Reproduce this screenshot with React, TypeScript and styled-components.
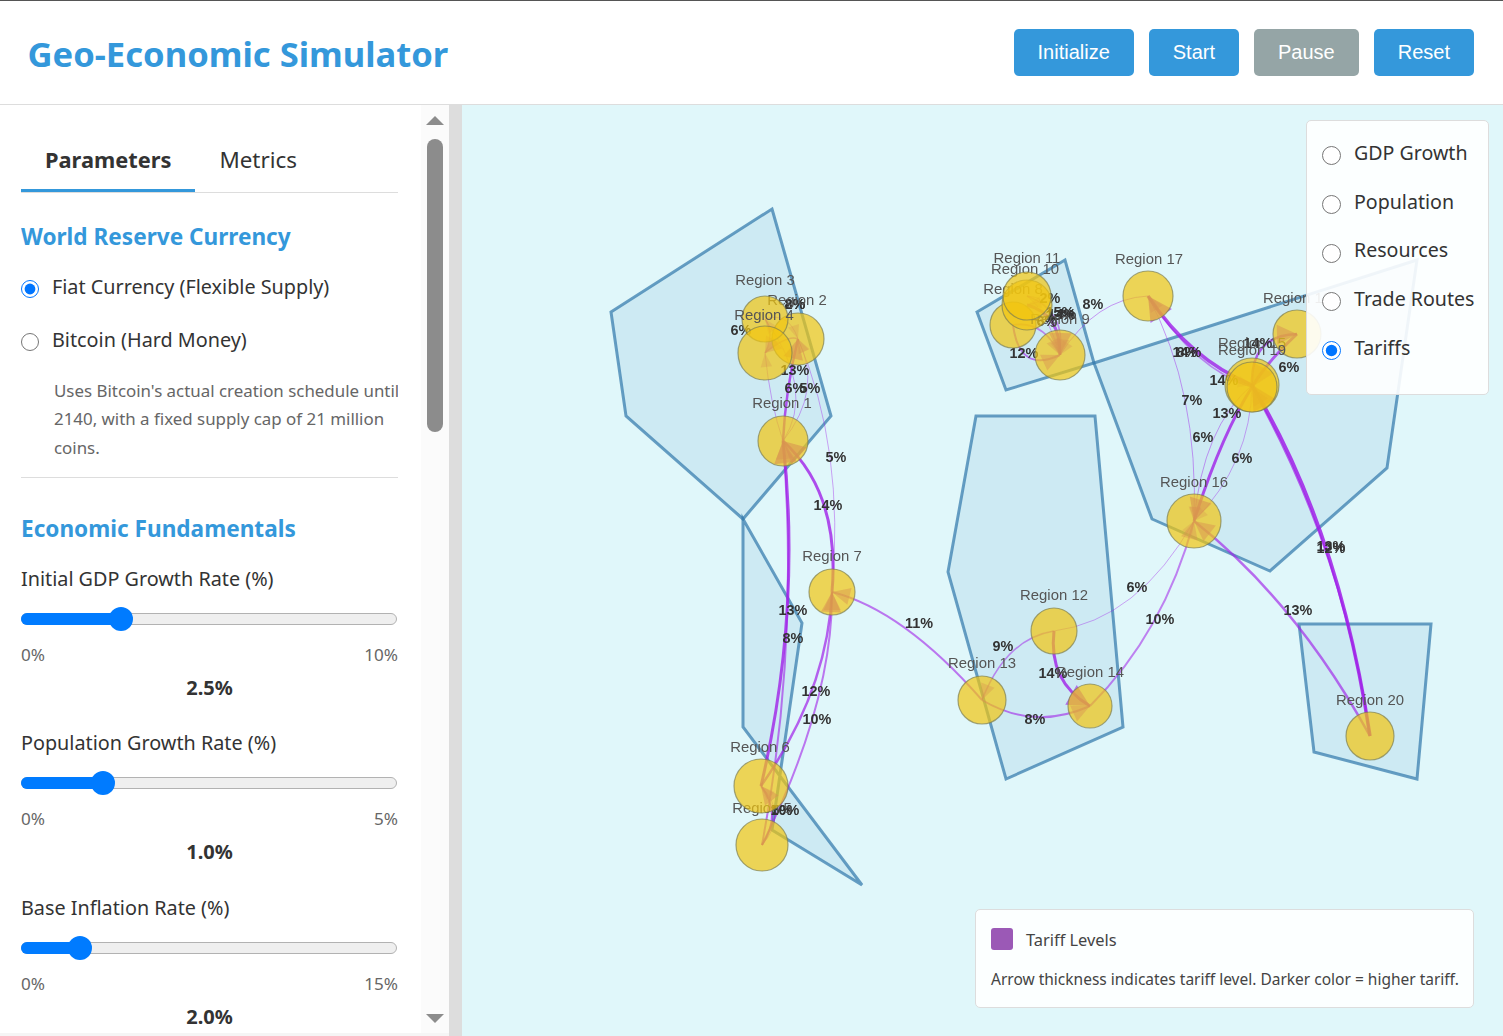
import React from "react";
import styled, { createGlobalStyle } from "styled-components";

const Global = createGlobalStyle`
  html, body { margin: 0; padding: 0; height: 100%; overflow: hidden; background: #f5f5f5; }
  #root { height: 100%; }
`;
const SANS = `"Noto Sans", "Open Sans", sans-serif`;
const ARIAL = `"Liberation Sans", Arial, sans-serif`;

const Page = styled.div`
  height: 1036px; display: flex; flex-direction: column;
  border-top: 1px solid #555; box-sizing: border-box; font-family: ${SANS}; color: #333;
`;
const Header = styled.header`
  height: 104px; box-sizing: border-box; background: #fff; border-bottom: 1px solid #ddd;
  display: flex; align-items: center; justify-content: space-between; padding: 0 29px 0 27.5px; flex: none;
`;
const Title = styled.h1`
  margin: 0; font-size: 34.6px; font-weight: 700; color: #3498db; line-height: 1; padding-top: 4px;
`;
const Buttons = styled.div`display: flex; gap: 15px;`;
const Button = styled.button<{ $muted?: boolean }>`
  height: 47px; padding: 0 24px; border: 0; border-radius: 5px; color: #fff;
  background: ${(p) => (p.$muted ? "#95a5a6" : "#3498db")};
  font-family: ${ARIAL}; font-size: 20px;
`;
const Body = styled.div`flex: 1; display: flex; min-height: 0;`;
const Sidebar = styled.aside`
  width: 449px; height: 928px; flex: none; display: flex; background: #fff; overflow: hidden;
`;
const SideContent = styled.div`width: 377px; margin-left: 21px; overflow: hidden; flex: none;`;
const Scrollbar = styled.div`
  width: 28px; margin-left: 23px; flex: none; background: #fbfbfb;
  display: flex; flex-direction: column; align-items: center;
`;
const ArrowUp = styled.div`
  width: 0; height: 0; margin-top: 11px; border-left: 9px solid transparent; border-right: 9px solid transparent;
  border-bottom: 9px solid #8c8c8c;
`;
const Thumb = styled.div`width: 16px; height: 293px; margin-top: 14px; border-radius: 8px; background: #8c8c8c;`;
const ArrowDown = styled.div`
  width: 0; height: 0; margin-top: auto; margin-bottom: 10px; border-left: 9px solid transparent; border-right: 9px solid transparent;
  border-top: 9px solid #8c8c8c;
`;
const Divider = styled.div`width: 13px; flex: none; background: #ddd;`;
const Tabs = styled.div`display: flex; height: 87px; border-bottom: 1px solid #ddd;`;
const Tab = styled.div<{ $active?: boolean }>`
  padding: 25px 24px 0; display: flex; align-items: center; height: 59px; margin-bottom: -1px;
  font-size: ${(p) => (p.$active ? "21.8px" : "22.4px")}; font-weight: ${(p) => (p.$active ? 700 : 400)};
  color: #333; border-bottom: 3px solid ${(p) => (p.$active ? "#3498db" : "transparent")};
`;
const SectionTitle = styled.h2<{ $top: number }>`
  margin: ${(p) => p.$top}px 0 0; font-size: 22.6px; line-height: 30px; font-weight: 700; color: #3498db;
`;
const RadioRow = styled.label<{ $top: number }>`
  display: flex; align-items: center; gap: 13px; margin-top: ${(p) => p.$top}px; height: 28px; font-size: 19.8px; color: #333;
`;
const Radio = styled.input.attrs({ type: "radio" })`
  width: 18px; height: 18px; margin: 6px 0 0; flex: none; accent-color: #0075ff;
`;
const Description = styled.p`
  margin: 23.5px 0 0 33px; font-size: 16.9px; line-height: 28.6px; color: #666; white-space: nowrap;
`;
const Rule = styled.hr`margin: 14.5px 0 0; border: 0; border-top: 1px solid #ddd;`;
const SliderGroup = styled.div<{ $top: number }>`margin-top: ${(p) => p.$top}px;`;
const SliderLabel = styled.div`font-size: 19.8px; line-height: 28px; color: #333;`;
const Track = styled.div`
  position: relative; height: 12px; margin-top: 20px; box-sizing: border-box;
  background: #efefef; border: 1px solid #b2b2b2; border-radius: 6px; margin-right: 1px;
`;
const Fill = styled.div`
  position: absolute; left: -1px; top: -1px; height: 12px; background: #007bff; border-radius: 6px;
`;
const Knob = styled.div`
  position: absolute; top: -7px; width: 24px; height: 24px; margin-left: -12px; border-radius: 50%; background: #007bff;
`;
const Range = styled.div`
  display: flex; justify-content: space-between; margin-top: 18px; font-size: 17.1px; line-height: 24px; color: #666;
`;
const Value = styled.div`
  text-align: center; font-size: 20px; line-height: 28px; margin-top: 7px; font-weight: 700; color: #333;
`;

const MapArea = styled.main`flex: 1; position: relative; background: #e0f7fa; overflow: hidden;`;
const MapSvg = styled.svg`position: absolute; inset: 0; width: 100%; height: 100%; filter: blur(0.6px);`;
const Overlay = styled.div`
  position: absolute; right: 14px; top: 15px; width: 183px; height: 275px; box-sizing: border-box;
  background: rgba(255, 255, 255, 0.9); border: 1px solid #ddd; border-radius: 5px;
  padding: 7px 0 0 15px; display: flex; flex-direction: column;
`;
const LayerRow = styled.label`
  display: flex; align-items: center; gap: 13px; height: 48.7px; font-size: 19.6px; color: #333; white-space: nowrap;
`;
const LayerRadio = styled(Radio)`width: 19px; height: 19px; margin-top: 7px;`;
const Legend = styled.div`
  position: absolute; right: 29px; bottom: 28px; width: 499px; height: 99px; box-sizing: border-box;
  background: rgba(255, 255, 255, 0.9); border: 1px solid #ddd; border-radius: 5px; padding: 18px 15px 0;
`;
const LegendHead = styled.div`display: flex; align-items: center; gap: 13px; height: 22px; font-size: 16.4px; color: #444;`;
const Swatch = styled.span`width: 22px; height: 22px; border-radius: 3px; background: #9b59b6; flex: none;`;
const LegendText = styled.div`margin-top: 17px; font-size: 15.5px; line-height: 24px; color: #444; white-space: nowrap;`;
const RegionLabel = styled.text`font-family: ${ARIAL}; font-size: 14.9px; fill: #555; text-anchor: middle;`;
const RouteLabel = styled.text`font-family: ${ARIAL}; font-size: 14.4px; font-weight: 700; fill: #333; text-anchor: middle;`;

type P = [number, number];
const regions: Record<number, { c: P; r: number; l: P }> = {
  1: { c: [783, 441], r: 25, l: [782, 408] },
  2: { c: [798, 339], r: 26, l: [797, 305] },
  3: { c: [765, 319], r: 23, l: [765, 285] },
  4: { c: [765, 353], r: 27, l: [764, 320] },
  5: { c: [762, 845], r: 26, l: [762, 813] },
  6: { c: [761, 786], r: 27, l: [760, 752] },
  7: { c: [832, 592], r: 23, l: [832, 561] },
  8: { c: [1013, 325], r: 23, l: [1013, 294] },
  9: { c: [1060, 355], r: 25, l: [1060, 324] },
  10: { c: [1027, 305], r: 25, l: [1025, 274] },
  11: { c: [1027, 296], r: 24, l: [1027, 263] },
  12: { c: [1054, 631], r: 23, l: [1054, 600] },
  13: { c: [982, 700], r: 24, l: [982, 668] },
  14: { c: [1090, 706], r: 22, l: [1090, 677] },
  15: { c: [1252, 385], r: 27, l: [1252, 348] },
  16: { c: [1194, 521], r: 27, l: [1194, 487] },
  17: { c: [1148, 296], r: 25, l: [1149, 264] },
  18: { c: [1297, 334], r: 24, l: [1297, 303] },
  19: { c: [1252, 387], r: 25, l: [1252, 355] },
  20: { c: [1370, 736], r: 24, l: [1370, 705] },
};
const polygons = [
  "772,209 831,416 743,519 626,416 611,312",
  "743,519 802,623 772,830 862,885 743,727",
  "977,312 1065,260 1094,363 1006,390",
  "1094,363 1417,260 1387,468 1270,571 1152,519",
  "976,416 1095,416 1123,727 1006,779 948,572",
  "1299,624 1431,624 1417,779 1314,752",
];
// from, to, point the curve passes through, width, opacity, label, label position
type Route = [number, number, P, number, number, string?, P?];
const routes: Route[] = [
  [7, 1, [824, 505], 3, 0.8, "14%", [828, 510]],
  [7, 2, [830, 457], 1, 0.4, "5%", [836, 462]],
  [6, 1, [787, 612], 3, 0.8, "13%", [793, 615]],
  [5, 1, [786, 645], 2, 0.6, "8%", [793, 643]],
  [6, 7, [812, 690], 2.5, 0.7, "12%", [816, 696]],
  [5, 7, [815, 710], 2, 0.6, "10%", [817, 724]],
  [5, 6, [772, 815], 2, 0.7, "10%", [785, 815]],
  [5, 6, [775, 815], 1, 0.4, "5%", [782, 815]],
  [1, 2, [788, 390], 2.5, 0.75, "13%", [795, 375]],
  [1, 3, [795, 385], 1, 0.4, "6%", [795, 393]],
  [1, 2, [807, 390], 1, 0.4, "5%", [810, 393]],
  [3, 4, [770, 335], 1.5, 0.5, "6%", [741, 335]],
  [2, 4, [785, 340], 1.5, 0.5, "2%", [795, 309]],
  [3, 2, [785, 320], 1, 0.4, "8%", [795, 309]],
  [1, 4, [772, 400], 1, 0.4],
  [13, 7, [905, 628], 2, 0.6, "11%", [919, 628]],
  [12, 13, [1012, 652], 1.5, 0.5, "9%", [1003, 651]],
  [12, 16, [1131, 598], 1, 0.4, "6%", [1137, 592]],
  [14, 16, [1153, 623], 2, 0.55, "10%", [1160, 624]],
  [12, 14, [1060, 675], 3, 0.8, "14%", [1053, 678]],
  [13, 14, [1035, 717], 2, 0.6, "8%", [1035, 724]],
  [20, 16, [1289, 615], 2.5, 0.65, "13%", [1298, 615]],
  [20, 15, [1325, 545], 3.5, 0.85, "12%", [1331, 553]],
  [20, 19, [1327, 555], 2, 0.7, "13%", [1331, 551]],
  [15, 17, [1195, 350], 3.5, 0.8, "14%", [1187, 357]],
  [19, 17, [1198, 356], 1.5, 0.5, "8%", [1187, 357]],
  [17, 16, [1185, 400], 1, 0.45, "7%", [1192, 405]],
  [15, 16, [1213, 440], 1, 0.45, "6%", [1203, 442]],
  [19, 16, [1222, 445], 3, 0.8, "13%", [1227, 418]],
  [15, 16, [1237, 458], 1, 0.4, "6%", [1242, 463]],
  [18, 19, [1270, 362], 3, 0.7, "6%", [1289, 372]],
  [19, 18, [1262, 348], 2.5, 0.7, "14%", [1258, 348]],
  [19, 15, [1230, 380], 1, 0.4, "14%", [1224, 385]],
  [8, 9, [1028, 357], 2, 0.6, "12%", [1024, 358]],
  [10, 9, [1052, 322], 3, 0.7, "15%", [1060, 317]],
  [11, 9, [1055, 318], 1.5, 0.5, "14%", [1062, 319]],
  [8, 9, [1040, 330], 1.5, 0.5, "13%", [1060, 320]],
  [11, 9, [1045, 318], 1, 0.4, "6%", [1047, 326]],
  [11, 10, [1040, 300], 1, 0.4, "2%", [1050, 303]],
  [17, 9, [1100, 312], 1, 0.45, "8%", [1093, 309]],
];

function RouteArrow({ route }: { route: Route }) {
  const [from, to, pass, width, opacity] = route;
  const a = regions[from].c;
  const b = regions[to].c;
  const cx = 2 * pass[0] - (a[0] + b[0]) / 2;
  const cy = 2 * pass[1] - (a[1] + b[1]) / 2;
  const dx = b[0] - cx;
  const dy = b[1] - cy;
  const len = Math.hypot(dx, dy) || 1;
  const ux = dx / len;
  const uy = dy / len;
  const size = 10 + width * 4;
  const half = 3 + width * 2.8;
  const bx = b[0] - ux * size;
  const by = b[1] - uy * size;
  const head = `${b[0]},${b[1]} ${bx - uy * half},${by + ux * half} ${bx + uy * half},${by - ux * half}`;
  return (
    <g>
      <path d={`M${a[0]} ${a[1]}Q${cx} ${cy} ${b[0]} ${b[1]}`} fill="none" stroke="#a020e8" strokeWidth={width} strokeOpacity={opacity} />
      <polygon points={head} fill="#a020e8" fillOpacity={opacity * 0.75} />
    </g>
  );
}

const sliders = [
  { label: "Initial GDP Growth Rate (%)", pct: 26.5, max: "10%", value: "2.5%" },
  { label: "Population Growth Rate (%)", pct: 21.7, max: "5%", value: "1.0%" },
  { label: "Base Inflation Rate (%)", pct: 15.6, max: "15%", value: "2.0%" },
];
const layers = ["GDP Growth", "Population", "Resources", "Trade Routes", "Tariffs"];

export default function App() {
  return (
    <Page>
      <Global />
      <Header>
        <Title>Geo-Economic Simulator</Title>
        <Buttons>
          <Button>Initialize</Button>
          <Button>Start</Button>
          <Button $muted>Pause</Button>
          <Button>Reset</Button>
        </Buttons>
      </Header>
      <Body>
        <Sidebar>
          <SideContent>
            <Tabs>
              <Tab $active>Parameters</Tab>
              <Tab>Metrics</Tab>
            </Tabs>
            <SectionTitle $top={29}>World Reserve Currency</SectionTitle>
            <RadioRow $top={20}><Radio name="money" defaultChecked />Fiat Currency (Flexible Supply)</RadioRow>
            <RadioRow $top={25}><Radio name="money" />Bitcoin (Hard Money)</RadioRow>
            <Description>
              Uses Bitcoin's actual creation schedule until<br />
              2140, with a fixed supply cap of 21 million<br />
              coins.
            </Description>
            <Rule />
            <SectionTitle $top={36}>Economic Fundamentals</SectionTitle>
            {sliders.map((s, i) => (
              <SliderGroup key={s.label} $top={i === 0 ? 21 : 27.5}>
                <SliderLabel>{s.label}</SliderLabel>
                <Track>
                  <Fill style={{ width: `${s.pct}%` }} />
                  <Knob style={{ left: `${s.pct}%` }} />
                </Track>
                <Range><span>0%</span><span>{s.max}</span></Range>
                <Value>{s.value}</Value>
              </SliderGroup>
            ))}
          </SideContent>
          <Scrollbar>
            <ArrowUp />
            <Thumb />
            <ArrowDown />
          </Scrollbar>
        </Sidebar>
        <Divider />
        <MapArea>
          <MapSvg viewBox="462 105 1041 931" preserveAspectRatio="none">
            {polygons.map((pts) => (
              <polygon key={pts} points={pts} fill="#2980b9" fillOpacity={0.1} stroke="#2f76aa" strokeOpacity={0.7} strokeWidth={3} />
            ))}
            {routes.map((r, i) => <RouteArrow key={i} route={r} />)}
            {routes.map((r, i) => r[5] && r[6] ? <RouteLabel key={i} x={r[6][0]} y={r[6][1]}>{r[5]}</RouteLabel> : null)}
            {Object.entries(regions).map(([id, reg]) => (
              <g key={id}>
                <circle cx={reg.c[0]} cy={reg.c[1]} r={reg.r} fill="#f1c40f" fillOpacity={0.7} stroke="#7f7f50" strokeOpacity={0.7} strokeWidth={1.2} />
                <RegionLabel x={reg.l[0]} y={reg.l[1]}>Region {id}</RegionLabel>
              </g>
            ))}
          </MapSvg>
          <Overlay>
            {layers.map((l) => (
              <LayerRow key={l}><LayerRadio name="layer" defaultChecked={l === "Tariffs"} />{l}</LayerRow>
            ))}
          </Overlay>
          <Legend>
            <LegendHead><Swatch />Tariff Levels</LegendHead>
            <LegendText>Arrow thickness indicates tariff level. Darker color = higher tariff.</LegendText>
          </Legend>
        </MapArea>
      </Body>
    </Page>
  );
}
